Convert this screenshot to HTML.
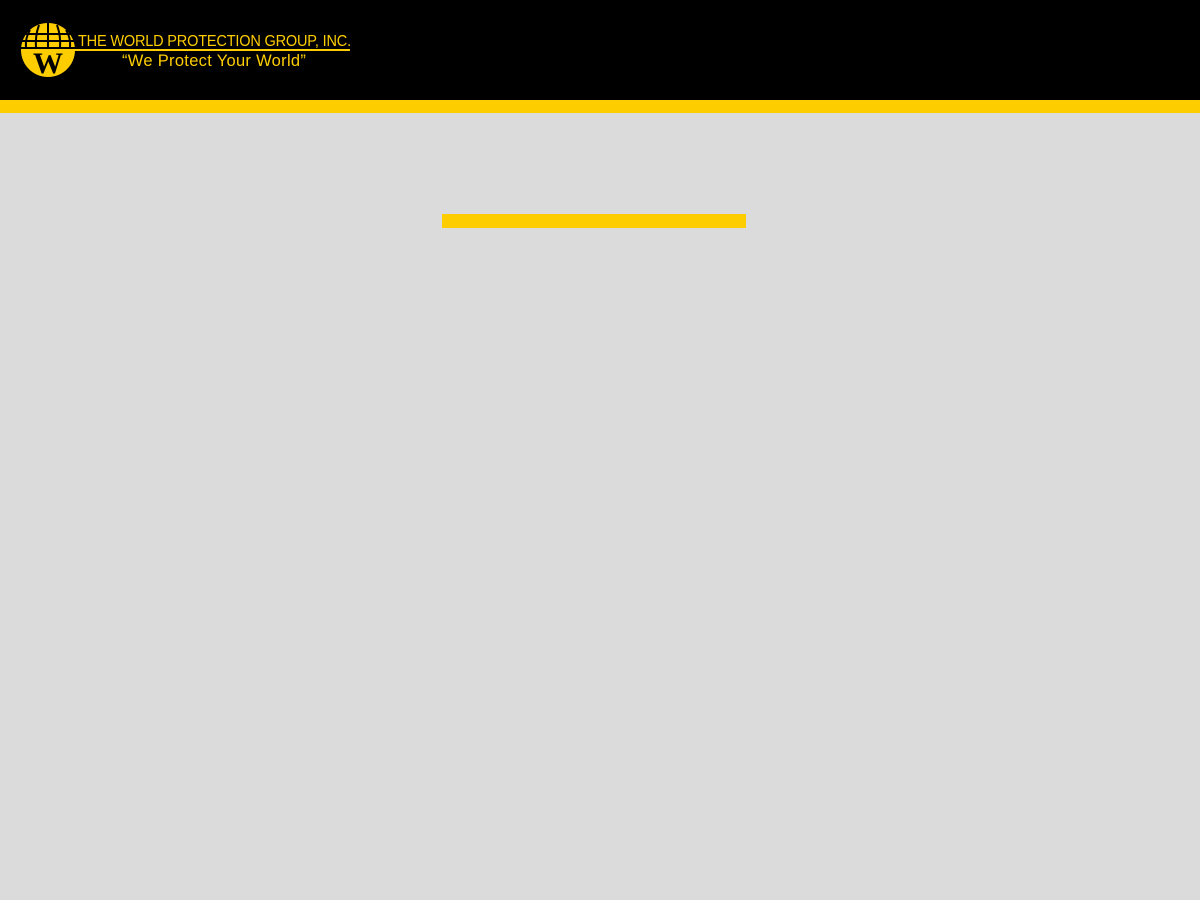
<!DOCTYPE html>
<html><head><style>
body{margin:0;width:1200px;height:900px;background:#dbdbdb;overflow:hidden;font-family:"Liberation Sans",sans-serif}
.hd{position:absolute;left:0;top:0;width:1200px;height:100px;background:#000}
.yb{position:absolute;left:0;top:100px;width:1200px;height:13px;background:#fdcd00}
.bar{position:absolute;left:442px;top:214px;width:304px;height:14px;background:#fdcd00}
.t1{position:absolute;left:78px;top:33px;color:#fdcd00;font-size:15.5px;white-space:nowrap;letter-spacing:-0.2px;transform:scaleX(0.937);transform-origin:left}
.ul{position:absolute;left:66px;top:49px;width:284px;height:2px;background:#fdcd00}
.t2{position:absolute;left:122px;top:52px;color:#fdcd00;font-size:16.5px;letter-spacing:0.3px;white-space:nowrap}
</style></head><body>
<div class="hd">
<svg style="position:absolute;left:20px;top:22px" width="56" height="56" viewBox="0 0 56 56">
<circle cx="28" cy="28" r="27" fill="#fdcd00"/>
<g stroke="#000" stroke-width="2" fill="none">
<line x1="2" y1="12" x2="54" y2="12"/><line x1="1" y1="19" x2="55" y2="19"/><line x1="1" y1="26" x2="55" y2="26"/>
<path d="M28 1V26M19 3Q15 14 16 26M37 3Q41 14 40 26M10 8Q5 16 6 26M46 8Q51 16 50 26"/>
</g>
<text x="28" y="51" text-anchor="middle" font-family="Liberation Serif" font-weight="bold" font-size="30" fill="#000">W</text>
</svg>
<div class="t1">THE WORLD PROTECTION GROUP, INC.</div>
<div class="ul"></div>
<div class="t2">“We Protect Your World”</div>
</div>
<div class="yb"></div>
<div class="bar"></div>
</body></html>
